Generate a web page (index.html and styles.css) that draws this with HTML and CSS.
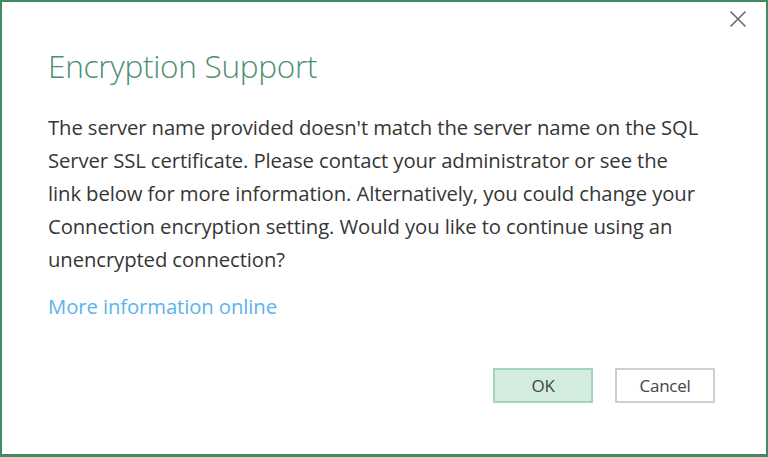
FILE: index.html
```html
<!DOCTYPE html>
<html>
<head>
<meta charset="utf-8">
<link rel="stylesheet" href="styles.css">
</head>
<body>
<div class="dialog">
  <div class="topbar">
    <button class="close" aria-label="Close">
      <svg width="18" height="18" viewBox="0 0 18 18"><path d="M1.5 1.5 L16.5 16.5 M16.5 1.5 L1.5 16.5" stroke="#6a6a6a" stroke-width="1.6" fill="none"/></svg>
    </button>
  </div>
  <div class="content">
    <h1 class="title">Encryption Support</h1>
    <p class="message">The server name provided doesn't match the server name on the SQL<br>Server SSL certificate. Please contact your administrator or see the<br>link below for more information. Alternatively, you could change your<br>Connection encryption setting. Would you like to continue using an<br>unencrypted connection?</p>
    <a class="link" href="#">More information online</a>
  </div>
  <div class="actions">
    <button class="btn btn-primary">OK</button>
    <button class="btn">Cancel</button>
  </div>
</div>
</body>
</html>
```
FILE: styles.css
```css
* { box-sizing: border-box; }
html, body { margin: 0; padding: 0; background: #ffffff; }
body { width: 768px; height: 457px; overflow: hidden; font-family: "Open Sans", "DejaVu Sans", sans-serif; }
.dialog {
  width: 768px;
  height: 457px;
  border: 2px solid #3f8c62;
  border-bottom-width: 3px;
  background: #ffffff;
  display: flex;
  flex-direction: column;
}
.topbar { display: flex; justify-content: flex-end; padding: 8px 19px 0 0; height: 30px; }
.close { border: none; background: none; padding: 0; width: 18px; height: 18px; display: flex; cursor: pointer; }
.content { padding: 14px 0 0 46px; display: flex; flex-direction: column; width: 722px; }
.title {
  margin: 0;
  font-weight: 300;
  font-size: 31.6px;
  line-height: 40px;
  color: #4d8f70;
  letter-spacing: -0.3px;
}
.message {
  margin: 25px 0 0 0;
  white-space: nowrap;
  font-size: 20.3px;
  line-height: 33px;
  color: #363636;
  letter-spacing: -0.1px;
}
.link {
  margin-top: 15px;
  font-size: 20.3px;
  line-height: 30px;
  color: #5cb3ee;
  text-decoration: none;
  letter-spacing: -0.1px;
  align-self: flex-start;
}
.actions { margin-top: auto; display: flex; justify-content: flex-end; gap: 22px; padding: 0 51px 51px 0; }
.btn {
  width: 100px;
  height: 35px;
  border: 2px solid #cfcfcf;
  background: #ffffff;
  color: #444444;
  font-family: "Open Sans", "DejaVu Sans", sans-serif;
  font-size: 17px;
  letter-spacing: -0.3px;
  padding: 0;
}
.btn-primary { background: #d3ecdf; border-color: #a3d6b9; }
```
